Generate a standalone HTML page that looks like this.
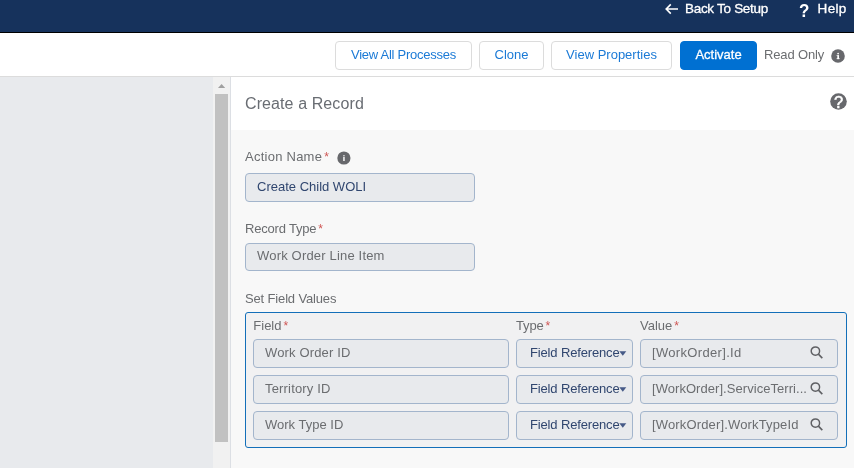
<!DOCTYPE html>
<html>
<head>
<meta charset="utf-8">
<style>
*{box-sizing:border-box;margin:0;padding:0}
html,body{width:854px;height:468px;overflow:hidden;background:#fff;font-family:"Liberation Sans",sans-serif;}
.abs{position:absolute}
#txt{position:absolute;left:0;top:0;width:854px;height:468px;will-change:transform;}
#top{left:0;top:0;width:854px;height:33px;background:#16325c;border-bottom:1px solid #000}
.t{position:absolute;color:#fff;font-size:13.5px;top:1px;line-height:16px;white-space:nowrap;-webkit-text-stroke:0.3px #fff}
#bar{left:0;top:33px;width:854px;height:44px;background:#fff;border-bottom:1px solid #dcdcdc}
.btn{position:absolute;top:41px;height:29px;border:1px solid #dcdcdc;border-radius:4px;background:#fff}
.bt{position:absolute;top:41px;height:29px;color:#1b7ad6;font-size:13px;line-height:27px;text-align:center;white-space:nowrap}
#left{left:0;top:77px;width:213px;height:391px;background:#e8eaed}
#track{left:213px;top:77px;width:17px;height:391px;background:#f1f1f1}
#thumb{left:215px;top:94px;width:13px;height:348px;background:#c1c1c1}
#panel{left:230px;top:77px;width:624px;height:391px;background:#f8f8f8;border-left:1px solid #dcdfe4}
#phead{left:231px;top:77px;width:623px;height:53px;background:#fff}
.lbl{position:absolute;color:#6b6d70;font-size:13px;line-height:16px;white-space:nowrap}
.lbl i{color:#cf5654;font-style:normal;font-size:12px;position:relative;top:-0.5px;margin-left:2px;letter-spacing:0}
.box{position:absolute;height:29px;border:1px solid #a3b5cc;border-radius:4px;background:#e8eaed}
.it{position:absolute;margin-top:1px;height:29px;color:#30466f;font-size:13px;line-height:27px;white-space:nowrap}
.g{color:#6b6d70}
#box{left:245px;top:312px;width:602px;height:136px;border:1px solid #136fb9;border-radius:3px;background:#f1f1f2}
</style>
</head>
<body>
<div class="abs" id="top"></div>
<div class="abs" id="bar"></div>
<div class="btn" style="left:335px;width:137px"></div>
<div class="btn" style="left:479px;width:65px"></div>
<div class="btn" style="left:551px;width:121px"></div>
<div class="btn" style="left:680px;width:77px;background:#0070d2;border-color:#0070d2"></div>
<div class="abs" id="left"></div>
<div class="abs" id="track"></div>
<div class="abs" id="thumb"></div>
<svg class="abs" style="left:217.9px;top:83.8px" width="8" height="5" viewBox="0 0 8 5"><path d="M0 4.1 L3.6 0 L7.2 4.1 Z" fill="#a0a0a0"/></svg>
<div class="abs" id="panel"></div>
<div class="abs" id="phead"></div>
<div class="abs" id="box"></div>

<div class="box" style="left:245px;top:173px;width:230px"></div>
<div class="box" style="left:245px;top:243px;width:230px;height:28px"></div>
<div class="box" style="left:253px;top:339px;width:256px"></div>
<div class="box" style="left:253px;top:375px;width:256px"></div>
<div class="box" style="left:253px;top:411px;width:256px"></div>
<div class="box" style="left:516px;top:339px;width:117px"></div>
<div class="box" style="left:516px;top:375px;width:117px"></div>
<div class="box" style="left:516px;top:411px;width:117px"></div>
<div class="box" style="left:640px;top:339px;width:198px"></div>
<div class="box" style="left:640px;top:375px;width:198px"></div>
<div class="box" style="left:640px;top:411px;width:198px"></div>

<!-- icons -->
<svg class="abs" style="left:664.5px;top:3px" width="14" height="12" viewBox="0 0 14 12"><path d="M5.8 1.4 L1.2 6 L5.8 10.6 M1.2 6 H13" fill="none" stroke="#fff" stroke-width="1.6"/></svg>
<svg class="abs" style="left:831.4px;top:48.8px" width="14" height="14" viewBox="0 0 14 14"><circle cx="7" cy="7" r="6.8" fill="#67686c"/><circle cx="7.1" cy="4.6" r="0.9" fill="#fff"/><rect x="6.3" y="6.1" width="1.7" height="4" fill="#fff"/><rect x="5.6" y="9.2" width="3" height="0.9" fill="#fff"/><rect x="5.6" y="6.1" width="1" height="0.8" fill="#fff"/></svg>
<svg class="abs" style="left:337px;top:151.3px" width="14" height="14" viewBox="0 0 14 14"><circle cx="6.9" cy="7" r="6.6" fill="#67686c"/><rect x="6.2" y="6" width="1.5" height="4" fill="#fff" opacity="0.95"/><rect x="6.2" y="4.1" width="1.5" height="1.3" fill="#fff" opacity="0.8"/></svg>
<svg class="abs" style="left:830px;top:93px" width="17" height="17" viewBox="0 0 17 17"><circle cx="8.5" cy="8.5" r="8.3" fill="#67686c"/></svg>

<svg class="abs" style="left:619px;top:350.5px" width="8" height="5" viewBox="0 0 8 5"><path d="M0.3 0.3 H7.3 L3.8 4.8 Z" fill="#465a87"/></svg>
<svg class="abs" style="left:619px;top:386.5px" width="8" height="5" viewBox="0 0 8 5"><path d="M0.3 0.3 H7.3 L3.8 4.8 Z" fill="#465a87"/></svg>
<svg class="abs" style="left:619px;top:422.5px" width="8" height="5" viewBox="0 0 8 5"><path d="M0.3 0.3 H7.3 L3.8 4.8 Z" fill="#465a87"/></svg>

<svg class="abs" style="left:810px;top:346px" width="13" height="13" viewBox="0 0 13 13"><circle cx="5.4" cy="5.1" r="4.2" fill="none" stroke="#5f6064" stroke-width="1.45"/><path d="M8.4 8.1 L12.3 12.1" stroke="#5f6064" stroke-width="1.6"/></svg>
<svg class="abs" style="left:810px;top:382px" width="13" height="13" viewBox="0 0 13 13"><circle cx="5.4" cy="5.1" r="4.2" fill="none" stroke="#5f6064" stroke-width="1.45"/><path d="M8.4 8.1 L12.3 12.1" stroke="#5f6064" stroke-width="1.6"/></svg>
<svg class="abs" style="left:810px;top:418px" width="13" height="13" viewBox="0 0 13 13"><circle cx="5.4" cy="5.1" r="4.2" fill="none" stroke="#5f6064" stroke-width="1.45"/><path d="M8.4 8.1 L12.3 12.1" stroke="#5f6064" stroke-width="1.6"/></svg>

<div id="txt">
  <span class="t" style="left:685px;letter-spacing:-0.3px">Back To Setup</span>
  <span class="t" style="left:799px;font-size:17px;top:2.6px;font-weight:bold;-webkit-text-stroke:0;transform:scaleY(1.1);transform-origin:50% 0">?</span>
  <span class="t" style="left:817.6px;letter-spacing:0.3px">Help</span>

  <div class="bt" style="left:335px;width:137px;letter-spacing:-0.25px">View All Processes</div>
  <div class="bt" style="left:479px;width:65px">Clone</div>
  <div class="bt" style="left:551px;width:121px">View Properties</div>
  <div class="bt" style="left:680px;width:77px;color:#fff;-webkit-text-stroke:0.3px #fff">Activate</div>
  <span class="lbl" style="left:764px;top:47px;letter-spacing:-0.15px">Read Only</span>

  <span class="lbl" style="left:834.1px;top:94.2px;font-size:16.5px;line-height:17px;color:#fff;-webkit-text-stroke:0.55px #fff">?</span>
  <span class="lbl" style="left:245px;top:93.5px;font-size:16px;line-height:20px;color:#696d73;letter-spacing:0.1px">Create a Record</span>

  <span class="lbl" style="left:245px;top:149px;letter-spacing:0.25px">Action Name<i>*</i></span>
  <div class="it" style="left:257px;top:172px">Create Child WOLI</div>

  <span class="lbl" style="left:245px;top:221px;letter-spacing:-0.2px">Record Type<i>*</i></span>
  <div class="it g" style="left:257px;top:241px;letter-spacing:0.18px">Work Order Line Item</div>

  <span class="lbl" style="left:245px;top:291px;letter-spacing:-0.15px">Set Field Values</span>
  <span class="lbl" style="left:253.3px;top:318px">Field<i>*</i></span>
  <span class="lbl" style="left:516px;top:318px;letter-spacing:-0.15px">Type<i>*</i></span>
  <span class="lbl" style="left:640px;top:318px">Value<i>*</i></span>

  <div class="it g" style="left:265px;top:338px;letter-spacing:0.15px">Work Order ID</div>
  <div class="it g" style="left:265px;top:374px;letter-spacing:0.17px">Territory ID</div>
  <div class="it g" style="left:265px;top:410px">Work Type ID</div>

  <div class="it" style="left:530px;top:338px;letter-spacing:-0.15px">Field Reference</div>
  <div class="it" style="left:530px;top:374px;letter-spacing:-0.15px">Field Reference</div>
  <div class="it" style="left:530px;top:410px;letter-spacing:-0.15px">Field Reference</div>

  <div class="it g" style="left:652px;top:338px;letter-spacing:0.33px">[WorkOrder].Id</div>
  <div class="it g" style="left:652px;top:374px;letter-spacing:0.05px">[WorkOrder].ServiceTerri...</div>
  <div class="it g" style="left:652px;top:410px;letter-spacing:0.15px">[WorkOrder].WorkTypeId</div>
</div>
</body>
</html>
